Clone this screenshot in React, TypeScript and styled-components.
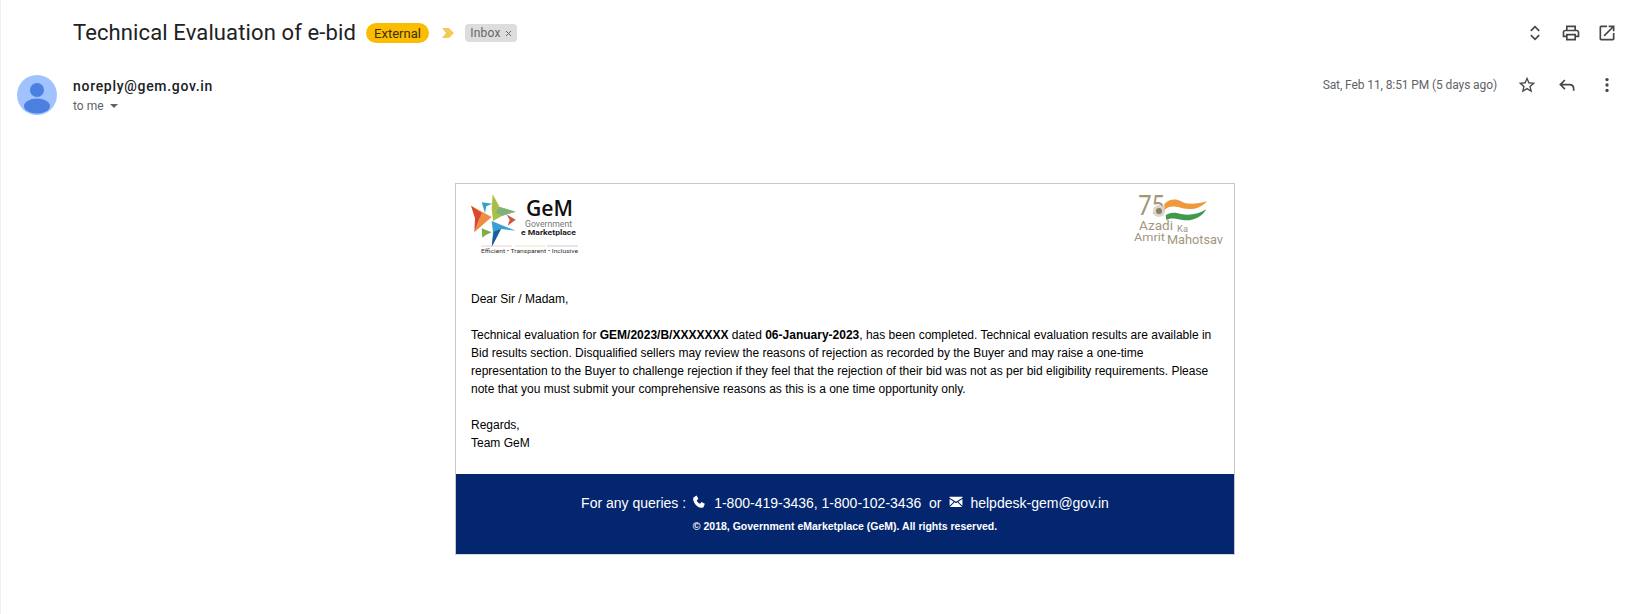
import React from "react";
import styled, { createGlobalStyle } from "styled-components";

const Global = createGlobalStyle`
  html, body { margin: 0; padding: 0; background: #fff; }
  body { font-family: Roboto, "Liberation Sans", sans-serif; }
`;

const Page = styled.div`
  width: 1632px;
  height: 614px;
  box-sizing: border-box;
  border-left: 1px solid #f1f1f1;
  overflow: hidden;
  display: flex;
  flex-direction: column;
`;

const SubjectRow = styled.div`
  display: flex;
  align-items: center;
  height: 32px;
  margin-top: 17px;
  padding: 0 15px 0 72px;
`;

const Subject = styled.h1`
  margin: 0;
  font: 400 22px/28px Roboto, sans-serif;
  letter-spacing: 0.12px;
  color: #202124;
  white-space: nowrap;
`;

const ExternalPill = styled.span`
  margin-left: 10px;
  height: 20px;
  width: 63px;
  box-sizing: border-box;
  display: flex;
  justify-content: center;
  align-items: center;
  border-radius: 10px;
  background: #fbbc04;
  color: #3c3200;
  font: 400 13px Roboto, sans-serif;
`;

const Marker = styled.svg`
  margin-left: 13px;
  width: 14px;
  height: 12px;
`;

const Chip = styled.span`
  margin-left: 9px;
  height: 18px;
  width: 52px;
  box-sizing: border-box;
  display: flex;
  justify-content: center;
  align-items: center;
  gap: 4px;
  border-radius: 4px;
  background: #dddddd;
  color: #666;
  letter-spacing: 0.2px;
  font: 400 12px Roboto, sans-serif;
`;

const Spacer = styled.div`
  flex: 1;
`;

const IconGroup = styled.div<{ $gap: number }>`
  display: flex;
  align-items: center;
  gap: ${(p) => p.$gap}px;
`;

const Icon = styled.svg`
  width: 20px;
  height: 20px;
  fill: #444746;
  display: block;
`;

const SenderRow = styled.div`
  display: flex;
  align-items: flex-start;
  margin-top: 26px;
  padding: 0 15px 0 16px;
`;

const Avatar = styled.svg`
  width: 40px;
  height: 40px;
  flex: none;
  display: block;
`;

const SenderInfo = styled.div`
  margin-left: 16px;
  display: flex;
  flex-direction: column;
`;

const SenderName = styled.div`
  font: 500 14px/20px Roboto, sans-serif;
  letter-spacing: 0.7px;
  padding-top: 1px;
  color: #202124;
`;

const ToLine = styled.div`
  display: flex;
  align-items: center;
  gap: 6px;
  font: 400 12px/20px Roboto, sans-serif;
  color: #5f6368;
`;

const Caret = styled.span`
  width: 0;
  height: 0;
  border-left: 4px solid transparent;
  border-right: 4px solid transparent;
  border-top: 4px solid #5f6368;
`;

const DateText = styled.span`
  font: 400 12px/20px Roboto, sans-serif;
  letter-spacing: -0.1px;
  color: #5f6368;
  margin-right: 20px;
`;

const Meta = styled.div`
  display: flex;
  align-items: center;
`;

const Card = styled.div`
  width: 780px;
  box-sizing: border-box;
  margin: 67px 0 0 454px;
  border: 1px solid #c6c6c6;
  border-bottom-color: #cfd6e6;
  display: flex;
  flex-direction: column;
  font-family: "Liberation Sans", Arial, sans-serif;
`;

const LogoRow = styled.div`
  display: flex;
  justify-content: space-between;
  align-items: flex-start;
  height: 106px;
  padding: 6px 3px 0 13px;
  box-sizing: border-box;
`;

const Body = styled.div`
  padding: 0 15px;
  font-size: 12px;
  line-height: 18px;
  color: #000;
  height: 184px;
`;

const Para = styled.p`
  margin: 0 0 18px;
`;

const Footer = styled.div`
  background: #04266f;
  height: 80px;
  color: #fff;
  display: flex;
  flex-direction: column;
  align-items: center;
  padding-top: 19px;
  box-sizing: border-box;
`;

const Query = styled.div`
  display: flex;
  align-items: center;
  font-size: 14px;
  line-height: 20px;
  white-space: pre;
`;

const FootIcon = styled.svg<{ $left: number; $right: number }>`
  width: 14px;
  height: 14px;
  fill: #fff;
  margin: -3px ${(p) => p.$right}px 0 ${(p) => p.$left}px;
`;

const Copy = styled.div`
  font-size: 10.5px;
  font-weight: 700;
  line-height: 14px;
  margin-top: 6px;
`;

const GemLogo = () => (
  <svg width="115" height="66" viewBox="0 0 115 66">
    <g transform="translate(-4 -1) scale(0.3333)">
      <polygon points="83,16 104,54 152,68 112,80 84,96 80,58" fill="#a9bf4a" />
      <polygon points="104,54 152,68 112,80 92,70" fill="#7fb27a" />
      <polygon points="50,40 82,44 64,52 60,72" fill="#3aa0c8" />
      <polygon points="18,50 80,84 28,130 44,88" fill="#ef8d44" />
      <polygon points="18,50 50,72 44,88 28,130 30,88" fill="#d8492f" />
      <polygon points="124,76 152,92 128,110 134,92" fill="#d4553f" />
      <polygon points="80,96 152,125 108,120 80,174 84,130" fill="#39a0d2" />
      <polygon points="86,128 108,120 80,174" fill="#1f5b9e" />
      <polygon points="50,118 80,130 62,138 52,146" fill="#7fae3e" />
    </g>
    <text x="57" y="26" fontFamily="'Open Sans', sans-serif" fontWeight="600" fontSize="21" textLength="47" lengthAdjust="spacingAndGlyphs" fill="#111">GeM</text>
    <text x="56" y="37" fontFamily="Roboto, sans-serif" fontSize="8.4" textLength="47" lengthAdjust="spacingAndGlyphs" fill="#777">Government</text>
    <text x="52" y="44.5" fontFamily="Roboto, sans-serif" fontWeight="700" fontSize="8" textLength="55" lengthAdjust="spacingAndGlyphs" fill="#222">e Marketplace</text>
    <line x1="12" y1="56" x2="43" y2="56" stroke="#eec3b5" strokeWidth="0.8" />
    <line x1="46" y1="56" x2="76" y2="56" stroke="#e0e4b8" strokeWidth="0.8" />
    <line x1="78" y1="56" x2="109" y2="56" stroke="#b3c0e0" strokeWidth="0.8" />
    <text x="12" y="63" fontFamily="Roboto, sans-serif" fontSize="5.6" textLength="97" lengthAdjust="spacingAndGlyphs" fill="#333">{"Efficient  •  Transparent  •  Inclusive"}</text>
  </svg>
);

const AzadiLogo = () => (
  <svg width="100" height="60" viewBox="0 0 100 60">
    <text x="7" y="25" fontFamily="Lato, sans-serif" fontWeight="400" fontSize="27" textLength="27" lengthAdjust="spacingAndGlyphs" fill="#a3967b">75</text>
    <circle cx="28" cy="21" r="6" fill="#dcd6c8" />
    <circle cx="28" cy="21" r="3" fill="#8b8065" />
    <g transform="scale(0.3333)">
      <path d="M100 42C115 26 135 26 150 34C170 46 200 42 228 33C215 48 205 53 190 56C165 60 150 52 135 50C122 48 110 50 100 60Z" fill="#f0993c" />
      <path d="M104 76C115 66 130 66 150 72C175 78 205 72 226 58C215 76 200 86 180 90C160 93 148 88 134 86C122 84 112 86 106 90Z" fill="#3f9a4a" />
    </g>
    <text x="8" y="40" fontFamily="Roboto, sans-serif" fontSize="12.5" textLength="34" lengthAdjust="spacingAndGlyphs" fill="#a3967b">Azadi</text>
    <text x="46" y="42" fontFamily="Roboto, sans-serif" fontSize="9" textLength="11" lengthAdjust="spacingAndGlyphs" fill="#a3967b">Ka</text>
    <text x="3" y="51" fontFamily="Roboto, sans-serif" fontSize="10.5" textLength="31" lengthAdjust="spacingAndGlyphs" fill="#a3967b">Amrit</text>
    <text x="36" y="54" fontFamily="Roboto, sans-serif" fontSize="13.5" textLength="56" lengthAdjust="spacingAndGlyphs" fill="#a3967b">Mahotsav</text>
  </svg>
);

export default function App() {
  return (
    <Page>
      <Global />
      <SubjectRow>
        <Subject>Technical Evaluation of e-bid</Subject>
        <ExternalPill>External</ExternalPill>
        <Marker viewBox="0 0 14 12">
          <path d="M0 1h7l5 5-5 5H0l4-5z" fill="#f6c85a" />
        </Marker>
        <Chip>
          Inbox
          <svg width="7" height="7" viewBox="0 0 7 7">
            <path d="M1 1l5 5M6 1L1 6" stroke="#666" strokeWidth="1" fill="none" />
          </svg>
        </Chip>
        <Spacer />
        <IconGroup $gap={16}>
          <Icon viewBox="0 0 24 24">
            <path d="M7 9.5L12 4.5l5 5M7 14.5l5 5 5-5" fill="none" stroke="#444746" strokeWidth="2" />
          </Icon>
          <Icon viewBox="0 0 24 24">
            <path d="M19 8h-1V3H6v5H5c-1.66 0-3 1.34-3 3v6h4v4h12v-4h4v-6c0-1.66-1.34-3-3-3zM8 5h8v3H8V5zm8 12v2H8v-4h8v2zm2-2v-2H6v2H4v-4c0-.55.45-1 1-1h14c.55 0 1 .45 1 1v4h-2z" />
          </Icon>
          <Icon viewBox="0 0 24 24">
            <path d="M19 19H5V5h7V3H5c-1.11 0-2 .9-2 2v14c0 1.1.89 2 2 2h14c1.1 0 2-.9 2-2v-7h-2v7zM14 3v2h3.59l-9.83 9.83 1.41 1.41L19 6.41V10h2V3h-7z" />
          </Icon>
        </IconGroup>
      </SubjectRow>
      <SenderRow>
        <Avatar viewBox="0 0 40 40">
          <circle cx="20" cy="20" r="20" fill="#a0c3ff" />
          <circle cx="20" cy="15" r="7" fill="#4b7fe0" />
          <ellipse cx="20" cy="31" rx="13" ry="7.5" fill="#4b7fe0" />
        </Avatar>
        <SenderInfo>
          <SenderName>noreply@gem.gov.in</SenderName>
          <ToLine>
            to me <Caret />
          </ToLine>
        </SenderInfo>
        <Spacer />
        <Meta>
          <DateText>Sat, Feb 11, 8:51 PM (5 days ago)</DateText>
          <IconGroup $gap={20}>
            <Icon viewBox="0 0 24 24">
              <path d="M22 9.24l-7.19-.62L12 2 9.19 8.63 2 9.24l5.46 4.73L5.82 21 12 17.27 18.18 21l-1.63-7.03L22 9.24zM12 15.4l-3.76 2.27 1-4.28-3.32-2.88 4.38-.38L12 6.1l1.71 4.04 4.38.38-3.32 2.88 1 4.28L12 15.4z" />
            </Icon>
            <Icon viewBox="0 0 24 24">
              <path d="M9.5 6L4 11.5 9.5 17M4 11.5h11c3 0 5 2 5 5V19" fill="none" stroke="#444746" strokeWidth="2" />
            </Icon>
            <Icon viewBox="0 0 24 24">
              <circle cx="12" cy="5.5" r="2" />
              <circle cx="12" cy="12" r="2" />
              <circle cx="12" cy="18.5" r="2" />
            </Icon>
          </IconGroup>
        </Meta>
      </SenderRow>
      <Card>
        <LogoRow>
          <GemLogo />
          <AzadiLogo />
        </LogoRow>
        <Body>
          <Para>Dear Sir / Madam,</Para>
          <Para>
            Technical evaluation for <b>GEM/2023/B/XXXXXXX</b> dated <b>06-January-2023</b>, has been completed. Technical evaluation results are available in Bid results section. Disqualified sellers may review the reasons of rejection as recorded by the Buyer and may raise a one-time representation to the Buyer to challenge rejection if they feel that the rejection of their bid was not as per bid eligibility requirements. Please note that you must submit your comprehensive reasons as this is a one time opportunity only.
          </Para>
          <Para>
            Regards,
            <br />
            Team GeM
          </Para>
        </Body>
        <Footer>
          <Query>
            For any queries :
            <FootIcon viewBox="0 0 24 24" $left={6} $right={8}>
              <path d="M3 4l5-3 3 6-3 2c1 3 3 5 6 6l2-3 6 3-2 5c-1 2-3 2-5 2C10 22 2 14 2 7c0-1 0-2 1-3z" />
            </FootIcon>
            {"1-800-419-3436, 1-800-102-3436  or"}
            <FootIcon viewBox="0 0 24 24" $left={8} $right={7}>
              <path d="M1 3h22v1.5l-11 7-11-7zM1 7l7 4.5-7 7zM23 7v11.5l-7-7zM9.5 12.5l2.5 1.6 2.5-1.6 8 8h-21z" />
            </FootIcon>
            helpdesk-gem@gov.in
          </Query>
          <Copy>© 2018, Government eMarketplace (GeM). All rights reserved.</Copy>
        </Footer>
      </Card>
    </Page>
  );
}
